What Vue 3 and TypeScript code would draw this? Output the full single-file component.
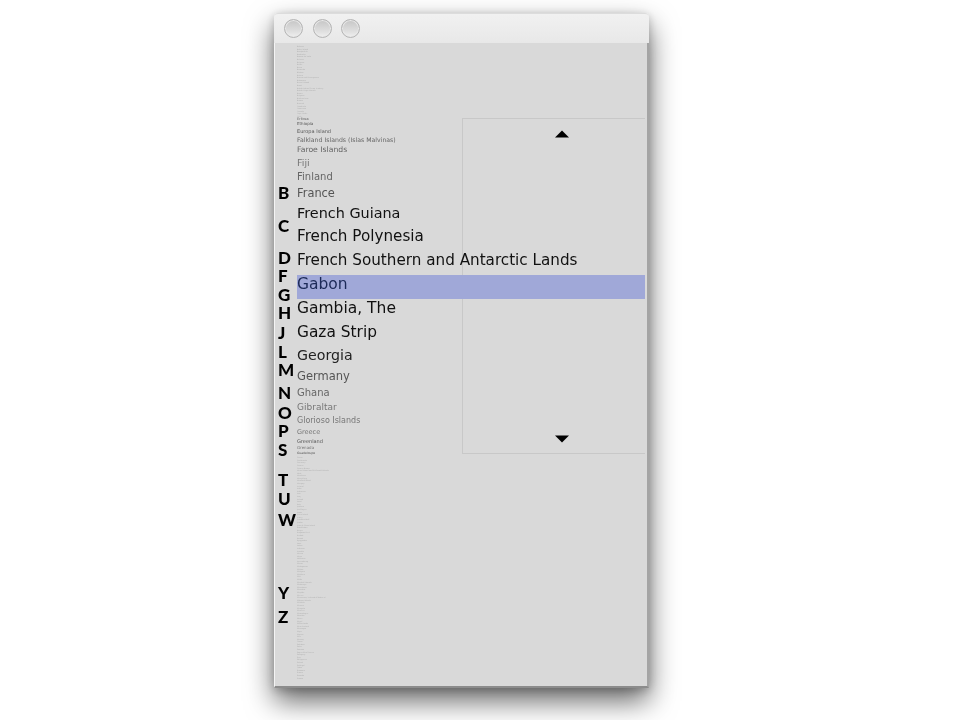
<script setup lang="ts">
interface Row {
  name: string
  size: number
  height: number
  color: string
}

const topTiny = [
  'Bahrain', 'Baker Island', 'Bangladesh', 'Barbados', 'Bassas da India', 'Belarus', 'Belgium', 'Belize', 'Benin',
  'Bermuda', 'Bhutan', 'Bolivia', 'Bosnia and Herzegovina', 'Botswana', 'Bouvet Island', 'Brazil',
  'British Indian Ocean Territory', 'British Virgin Islands', 'Brunei', 'Bulgaria', 'Burkina Faso', 'Burma', 'Burundi',
  'Cambodia', 'Cameroon', 'Canada', 'Cape Verde', 'Chile',
]

const bottomTiny = [
  'Guam', 'Guatemala', 'Guernsey', 'Guinea', 'Guinea-Bissau', 'Heard Island and McDonald Islands', 'Haiti', 'Honduras',
  'Hong Kong', 'Howland Island', 'Hungary', 'Iceland', 'India', 'Indonesia', 'Iran', 'Iraq', 'Ireland', 'Israel', 'Italy',
  'Jamaica', 'Jan Mayen', 'Japan', 'Jarvis Island', 'Jersey', 'Johnston Atoll', 'Jordan', 'Juan de Nova Island', 'Kazakhstan',
  'Kenya', 'Kingman Reef', 'Kiribati', 'Kuwait', 'Kyrgyzstan', 'Laos', 'Latvia', 'Lebanon', 'Lesotho', 'Liberia', 'Libya',
  'Lithuania', 'Luxembourg', 'Macau', 'Madagascar', 'Malawi', 'Malaysia', 'Maldives', 'Mali', 'Malta', 'Marshall Islands',
  'Martinique', 'Mauritania', 'Mauritius', 'Mayotte', 'Mexico', 'Micronesia, Federated States of', 'Midway Islands',
  'Moldova', 'Monaco', 'Mongolia', 'Morocco', 'Mozambique', 'Namibia', 'Nauru', 'Nepal', 'Netherlands', 'New Zealand',
  'Nicaragua', 'Niger', 'Nigeria', 'Niue', 'Norway', 'Oman', 'Pakistan', 'Palau', 'Panama', 'Papua New Guinea', 'Paraguay',
  'Peru', 'Philippines', 'Poland', 'Portugal', 'Qatar', 'Romania', 'Russia', 'Rwanda', 'Samoa',
]

const tiny = (name: string): Row => ({ name, size: 1.8, height: 2.6, color: '#b0b0b0' })

const rows: Row[] = [
  ...topTiny.map(tiny),
  { name: 'Eritrea', size: 3.5, height: 4.5, color: '#666' },
  { name: 'Ethiopia', size: 4, height: 6, color: '#555' },
  { name: 'Europa Island', size: 5, height: 8, color: '#555' },
  { name: 'Falkland Islands (Islas Malvinas)', size: 6.2, height: 9, color: '#666' },
  { name: 'Faroe Islands', size: 7.7, height: 12, color: '#666' },
  { name: 'Fiji', size: 9.5, height: 14, color: '#777' },
  { name: 'Finland', size: 10, height: 15, color: '#666' },
  { name: 'France', size: 11.4, height: 18, color: '#555' },
  { name: 'French Guiana', size: 14.4, height: 23, color: '#111' },
  { name: 'French Polynesia', size: 15.2, height: 24, color: '#111' },
  { name: 'French Southern and Antarctic Lands', size: 15.2, height: 24, color: '#111' },
  { name: 'Gabon', size: 15.5, height: 24, color: '#1c2a58' },
  { name: 'Gambia, The', size: 15.5, height: 24, color: '#111' },
  { name: 'Gaza Strip', size: 15.4, height: 23, color: '#111' },
  { name: 'Georgia', size: 14.2, height: 23, color: '#222' },
  { name: 'Germany', size: 11.5, height: 18, color: '#555' },
  { name: 'Ghana', size: 10, height: 15, color: '#666' },
  { name: 'Gibraltar', size: 9, height: 14, color: '#777' },
  { name: 'Glorioso Islands', size: 8, height: 12, color: '#777' },
  { name: 'Greece', size: 6.5, height: 10, color: '#777' },
  { name: 'Greenland', size: 5, height: 8, color: '#555' },
  { name: 'Grenada', size: 4, height: 6, color: '#777' },
  { name: 'Guadeloupe', size: 3, height: 4, color: '#555' },
  ...bottomTiny.map(tiny),
]

const selected = 'Gabon'

const letters: { ch: string; height: number }[] = [
  { ch: 'B', height: 33 },
  { ch: 'C', height: 32 },
  { ch: 'D', height: 18 },
  { ch: 'F', height: 19 },
  { ch: 'G', height: 18 },
  { ch: 'H', height: 20 },
  { ch: 'J', height: 19 },
  { ch: 'L', height: 18 },
  { ch: 'M', height: 23 },
  { ch: 'N', height: 20 },
  { ch: 'O', height: 18 },
  { ch: 'P', height: 19 },
  { ch: 'S', height: 30 },
  { ch: 'T', height: 19 },
  { ch: 'U', height: 21 },
  { ch: 'W', height: 73 },
  { ch: 'Y', height: 24 },
  { ch: 'Z', height: 20 },
]

// text sits a little above the middle of its row
const rowStyle = (r: Row) => ({
  height: r.height + 'px',
  lineHeight: r.height - r.size * 0.27 + 'px',
  fontSize: r.size + 'px',
  color: r.color,
})
</script>

<template>
  <div class="page">
    <div class="window">
      <div class="titlebar">
        <span class="light"></span>
        <span class="light"></span>
        <span class="light"></span>
      </div>
      <div class="content">
        <div class="scroller">
          <svg width="16" height="8" viewBox="0 0 16 8"><path d="M8 0.5 L15 7.5 L1 7.5 Z" fill="#000" /></svg>
          <svg width="16" height="8" viewBox="0 0 16 8"><path d="M1 0.5 L15 0.5 L8 7.5 Z" fill="#000" /></svg>
        </div>
        <div class="letters">
          <div
            v-for="l in letters"
            :key="l.ch"
            class="letter"
            :style="{ height: l.height + 'px' }"
          >{{ l.ch }}</div>
        </div>
        <div class="list">
          <div
            v-for="r in rows"
            :key="r.name"
            class="row"
            :class="{ selected: r.name === selected }"
            :style="rowStyle(r)"
          >{{ r.name }}</div>
        </div>
      </div>
    </div>
  </div>
</template>

<style scoped>
.page {
  width: 960px;
  height: 720px;
  padding: 13px 0 0 274px;
  box-sizing: border-box;
  overflow: hidden;
  background: #fff;
}

.window {
  width: 375px;
  height: 675px;
  display: flex;
  flex-direction: column;
  border-radius: 4px 4px 0 0;
  box-shadow: 0 13px 28px rgba(0, 0, 0, 0.6), 0 2px 10px rgba(0, 0, 0, 0.2);
  font-family: "DejaVu Sans", sans-serif;
  filter: blur(0.45px);
}

.titlebar {
  height: 30px;
  flex: none;
  display: flex;
  align-items: center;
  gap: 9.5px;
  padding-left: 10px;
  box-sizing: border-box;
  background: linear-gradient(#f1f1f1, #e8e8e8);
  border-top: 1px solid #dcdcdc;
  border-radius: 4px 4px 0 0;
}

.light {
  width: 19px;
  height: 19px;
  box-sizing: border-box;
  border-radius: 50%;
  border: 1px solid #b4b4b4;
  background: linear-gradient(#c6c6c6, #dedede 65%, #efefef);
  box-shadow: inset 0 0 0 1px #e8e8e8;
}

.content {
  flex: 1;
  position: relative;
  display: flex;
  background: #d9d9d9;
  border-left: 1px solid #f4f4f4;
  border-right: 2px solid #a4a4a4;
  border-bottom: 2px solid #8c8c8c;
  overflow: hidden;
}

.letters {
  width: 22px;
  flex: none;
  padding: 142px 0 0 3px;
  box-sizing: border-box;
}

.letter {
  font-family: Lato, "DejaVu Sans", sans-serif;
  font-size: 17px;
  font-weight: 900;
  line-height: 16px;
  color: #000;
}

.list {
  position: relative;
  width: 348px;
  flex: none;
  padding-top: 2px;
}

.row {
  white-space: nowrap;
}

.row.selected {
  background: #a0a8d8;
}

/* sits behind the list, the selected row covers its border */
.scroller {
  position: absolute;
  left: 187px;
  top: 75px;
  width: 183px;
  height: 336px;
  box-sizing: border-box;
  display: flex;
  flex-direction: column;
  align-items: center;
  justify-content: space-between;
  padding: 11px 0 10px 16px;
  border: 1px solid #c8c8c8;
  border-right: none;
}
</style>

<style>
html,
body {
  background: #fff;
}
</style>
